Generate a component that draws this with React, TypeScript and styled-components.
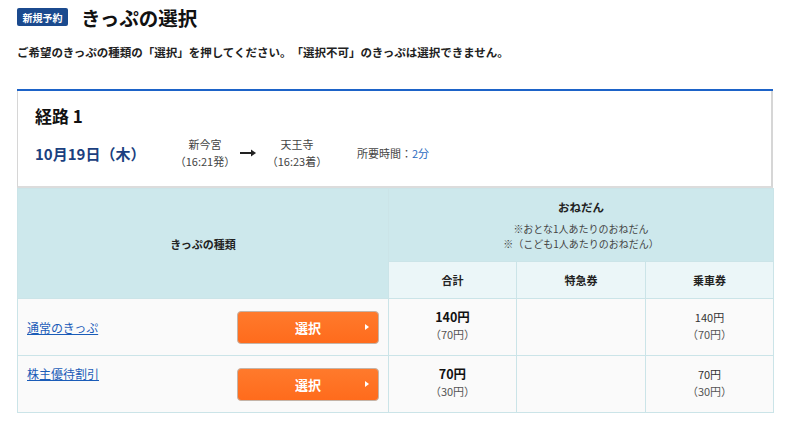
import styled, { createGlobalStyle } from 'styled-components';

const GlobalStyle = createGlobalStyle`
  body {
    margin: 0;
    background: #fff;
    color: #222;
    font-family: "Noto Sans CJK JP", "Noto Sans", sans-serif;
    text-spacing-trim: space-all;
  }
`;

const fares = [
  { name: '通常のきっぷ', total: '140円', totalChild: '（70円）', fare: '140円', fareChild: '（70円）', top: false },
  { name: '株主優待割引', total: '70円', totalChild: '（30円）', fare: '70円', fareChild: '（30円）', top: true },
];

const App = () => {
  return (
    <Page>
      <GlobalStyle />
      <Header>
        <Badge>新規予約</Badge>
        <Title>きっぷの選択</Title>
      </Header>
      <Lead>ご希望のきっぷの種類の「選択」を押してください。「選択不可」のきっぷは選択できません。</Lead>
      <Card>
        <RouteInfo>
          <RouteTitle>経路 1</RouteTitle>
          <RouteRow>
            <DateText>10月19日（木）</DateText>
            <Station>
              <span>新今宮</span>
              <span>（16:21発）</span>
            </Station>
            <Arrow>
              <svg width="16" height="8" viewBox="0 0 16 8">
                <path d="M0 4h12" stroke="#222" strokeWidth="2" />
                <path d="M11 0.5L16 4L11 7.5Z" fill="#222" />
              </svg>
            </Arrow>
            <Station>
              <span>天王寺</span>
              <span>（16:23着）</span>
            </Station>
            <Duration>
              所要時間：<em>2分</em>
            </Duration>
          </RouteRow>
        </RouteInfo>
        <Table>
          <colgroup>
            <col style={{ width: 371 }} />
            <col style={{ width: 128 }} />
            <col style={{ width: 129 }} />
            <col style={{ width: 128 }} />
          </colgroup>
          <thead>
            <tr>
              <HeadCell rowSpan={2}>きっぷの種類</HeadCell>
              <GroupCell colSpan={3}>
                <strong>おねだん</strong>
                <small>※おとな1人あたりのおねだん</small>
                <small>※（こども1人あたりのおねだん）</small>
              </GroupCell>
            </tr>
            <tr>
              <SubHeadCell>合計</SubHeadCell>
              <SubHeadCell>特急券</SubHeadCell>
              <SubHeadCell>乗車券</SubHeadCell>
            </tr>
          </thead>
          <tbody>
            {fares.map((f) => (
              <tr key={f.name}>
                <TypeCell>
                  <TypeInner $top={f.top}>
                    <FareLink href="#">{f.name}</FareLink>
                    <SelectButton type="button">
                      選択
                      <Tri />
                    </SelectButton>
                  </TypeInner>
                </TypeCell>
                <PriceCell>
                  <Total>{f.total}</Total>
                  <Child>{f.totalChild}</Child>
                </PriceCell>
                <PriceCell />
                <PriceCell>
                  <Plain>{f.fare}</Plain>
                  <Child>{f.fareChild}</Child>
                </PriceCell>
              </tr>
            ))}
          </tbody>
        </Table>
      </Card>
    </Page>
  );
};

const Page = styled.div`
  width: 800px;
  height: 437px;
  padding: 6px 27px 0 17px;
  box-sizing: border-box;
  overflow: hidden;
`;

const Header = styled.div`
  display: flex;
  align-items: center;
  gap: 13px;
  height: 22px;
`;

const Badge = styled.span`
  display: inline-flex;
  align-items: center;
  justify-content: center;
  width: 51px;
  height: 18px;
  background: #1b4a8e;
  color: #fff;
  font-size: 10px;
  font-weight: 700;
  border-radius: 2px;
`;

const Title = styled.h1`
  margin: 0;
  font-size: 19.5px;
  font-weight: 700;
  color: #111;
`;

const Lead = styled.p`
  margin: 16px 0 0;
  font-size: 11.5px;
  font-weight: 700;
  color: #222;
  line-height: 16px;
`;

const Card = styled.div`
  margin-top: 29px;
  width: 756px;
  border-top: 2px solid #1d63c8;
  box-sizing: border-box;
`;

const RouteInfo = styled.div`
  border-left: 1px solid #d6d6d6;
  border-right: 2px solid #d6d6d6;
  border-bottom: 2px solid #dcdcdc;
  padding: 13px 17px 0;
  height: 97px;
  box-sizing: border-box;
`;

const RouteTitle = styled.h2`
  margin: 0;
  font-size: 17px;
  font-weight: 700;
  color: #111;
  line-height: 24px;
`;

const RouteRow = styled.div`
  display: flex;
  align-items: center;
  margin-top: 8px;
`;

const DateText = styled.span`
  width: 137px;
  flex-shrink: 0;
  font-size: 15px;
  font-weight: 700;
  color: #1b3f80;
  white-space: nowrap;
`;

const Station = styled.div`
  display: flex;
  flex-direction: column;
  align-items: center;
  flex-shrink: 0;
  width: 66px;
  font-size: 11px;
  line-height: 17px;
  color: #444;
  white-space: nowrap;
`;

const Arrow = styled.span`
  display: flex;
  flex-shrink: 0;
  width: 16px;
  margin: 0 8px 0 2px;
`;

const Duration = styled.span`
  margin-left: 27px;
  font-size: 11px;
  color: #444;
  white-space: nowrap;
  em {
    font-style: normal;
    color: #2a6bc0;
  }
`;

const Table = styled.table`
  width: 756px;
  table-layout: fixed;
  border-collapse: collapse;
  td,
  th {
    border: 1px solid #cbe4e8;
    padding: 0;
  }
`;

const HeadCell = styled.th`
  background: #cde8ec;
  font-size: 11px;
  font-weight: 700;
  color: #222;
  text-align: center;
`;

const GroupCell = styled.th`
  height: 73px;
  box-sizing: border-box;
  padding-top: 9px !important;
  background: #cde8ec;
  text-align: center;
  vertical-align: top;
  strong {
    display: block;
    font-size: 11.5px;
    font-weight: 700;
    color: #222;
    line-height: 18px;
    margin-bottom: 5px;
  }
  small {
    display: block;
    font-size: 10px;
    font-weight: 400;
    color: #444;
    line-height: 15px;
  }
`;

const SubHeadCell = styled.th`
  height: 36px;
  background: #ebf6f8;
  font-size: 11px;
  font-weight: 700;
  color: #222;
  text-align: center;
`;

const TypeCell = styled.td`
  height: 56px;
  background: #fafafa;
`;

const TypeInner = styled.div<{ $top: boolean }>`
  display: flex;
  align-items: center;
  justify-content: space-between;
  padding: 0 9px;
  a {
    align-self: ${({ $top }) => ($top ? 'flex-start' : 'center')};
    margin-top: ${({ $top }) => ($top ? '-3px' : '0')};
  }
`;

const FareLink = styled.a`
  font-size: 12px;
  color: #1a5cb8;
  text-decoration: underline;
`;

const SelectButton = styled.button`
  position: relative;
  width: 142px;
  height: 33px;
  border: 1px solid #c4b4a8;
  border-radius: 4px;
  background: linear-gradient(#ff7a2c, #ff6b1c);
  color: #fff;
  font-family: inherit;
  font-size: 13px;
  font-weight: 700;
  cursor: pointer;
`;

const Tri = styled.span`
  position: absolute;
  right: 9px;
  top: 50%;
  margin-top: -3px;
  width: 0;
  height: 0;
  border-top: 3px solid transparent;
  border-bottom: 3px solid transparent;
  border-left: 4px solid #fff;
`;

const PriceCell = styled.td`
  background: #fafafa;
  text-align: center;
  vertical-align: middle;
  padding-bottom: 3px !important;
`;

const Total = styled.div`
  font-size: 12.5px;
  font-weight: 700;
  color: #111;
  line-height: 18px;
`;

const Plain = styled.div`
  font-size: 11px;
  color: #333;
  line-height: 17px;
`;

const Child = styled.div`
  font-size: 11px;
  color: #555;
  line-height: 17px;
`;

export default App;
